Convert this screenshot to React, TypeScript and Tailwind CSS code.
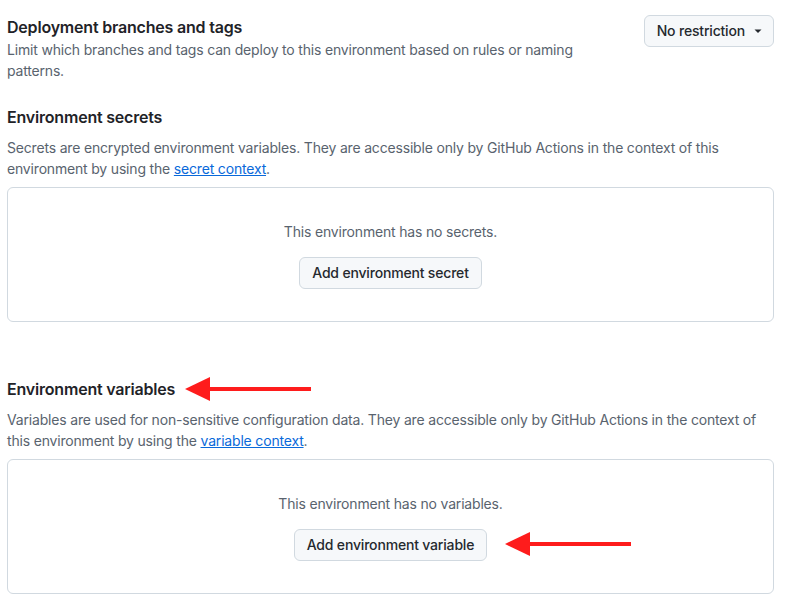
import React from "react";

// red annotation arrow pointing left
function Arrow({ className }: { className?: string }) {
  return (
    <svg
      className={className}
      width="126"
      height="26"
      viewBox="0 0 126 26"
      fill="none"
    >
      <path d="M0 13 L25 1 L25 25 Z" fill="#fe1c1c" />
      <rect x="22" y="11" width="104" height="4" fill="#fe1c1c" />
    </svg>
  );
}

function EmptyBox({ text, action }: { text: string; action: string }) {
  return (
    <div className="mt-2 flex flex-col items-center rounded-md border border-[#d1d9e0] pt-8 pb-8">
      <p className="text-sm leading-6 tracking-[-0.18px] text-[#59636e]">{text}</p>
      <button className="mt-[13px] h-8 rounded-md border border-[#d1d9e0] bg-[#f6f8fa] px-3 text-sm font-medium tracking-[-0.18px] text-[#25292e]">
        {action}
      </button>
    </div>
  );
}

export default function App() {
  return (
    <div
      className="min-h-screen bg-white pl-[7px] pr-[19px] pt-[15px] text-[#1f2328]"
      style={{ fontFamily: "Inter, 'Liberation Sans', sans-serif" }}
    >
      {/* Deployment branches */}
      <div className="flex items-start justify-between">
        <div className="w-[590px]">
          <h3 className="text-base font-semibold leading-6 tracking-[-0.2px]">
            Deployment branches and tags
          </h3>
          <p className="text-sm leading-[21px] tracking-[-0.18px] text-[#59636e]">
            Limit which branches and tags can deploy to this environment based
            on rules or naming patterns.
          </p>
        </div>
        <button className="flex h-8 items-center gap-2 rounded-md border border-[#d1d9e0] bg-[#f6f8fa] pl-3 pr-2.5 text-sm font-medium tracking-[-0.18px] text-[#25292e]">
          No restriction
          <svg width="10" height="10" viewBox="0 0 10 10">
            <path d="M1.5 3.5 L8.5 3.5 L5 7 Z" fill="#25292e" />
          </svg>
        </button>
      </div>

      {/* Secrets */}
      <div className="mt-6">
        <h3 className="text-base font-semibold leading-6 tracking-[-0.2px]">
          Environment secrets
        </h3>
        <p className="mt-2 text-sm leading-[21px] tracking-[-0.18px] text-[#59636e]">
          Secrets are encrypted environment variables. They are accessible only
          by GitHub Actions in the context of this environment by using the{" "}
          <a href="#" className="text-[#0969da] underline">
            secret context
          </a>
          .
        </p>
        <EmptyBox
          text="This environment has no secrets."
          action="Add environment secret"
        />
      </div>

      {/* Variables */}
      <div className="mt-[55px]">
        <div className="relative">
          <h3 className="text-base font-semibold leading-6 tracking-[-0.2px]">
            Environment variables
          </h3>
          <Arrow className="absolute left-[178px] top-[-1px]" />
        </div>
        <p className="mt-2 text-sm leading-[21px] tracking-[-0.18px] text-[#59636e]">
          Variables are used for non-sensitive configuration data. They are
          accessible only by GitHub Actions in the context of this environment
          by using the{" "}
          <a href="#" className="text-[#0969da] underline">
            variable context
          </a>
          .
        </p>
        <div className="relative">
          <EmptyBox
            text="This environment has no variables."
            action="Add environment variable"
          />
          <Arrow className="absolute left-[498px] top-[72px]" />
        </div>
      </div>
    </div>
  );
}
